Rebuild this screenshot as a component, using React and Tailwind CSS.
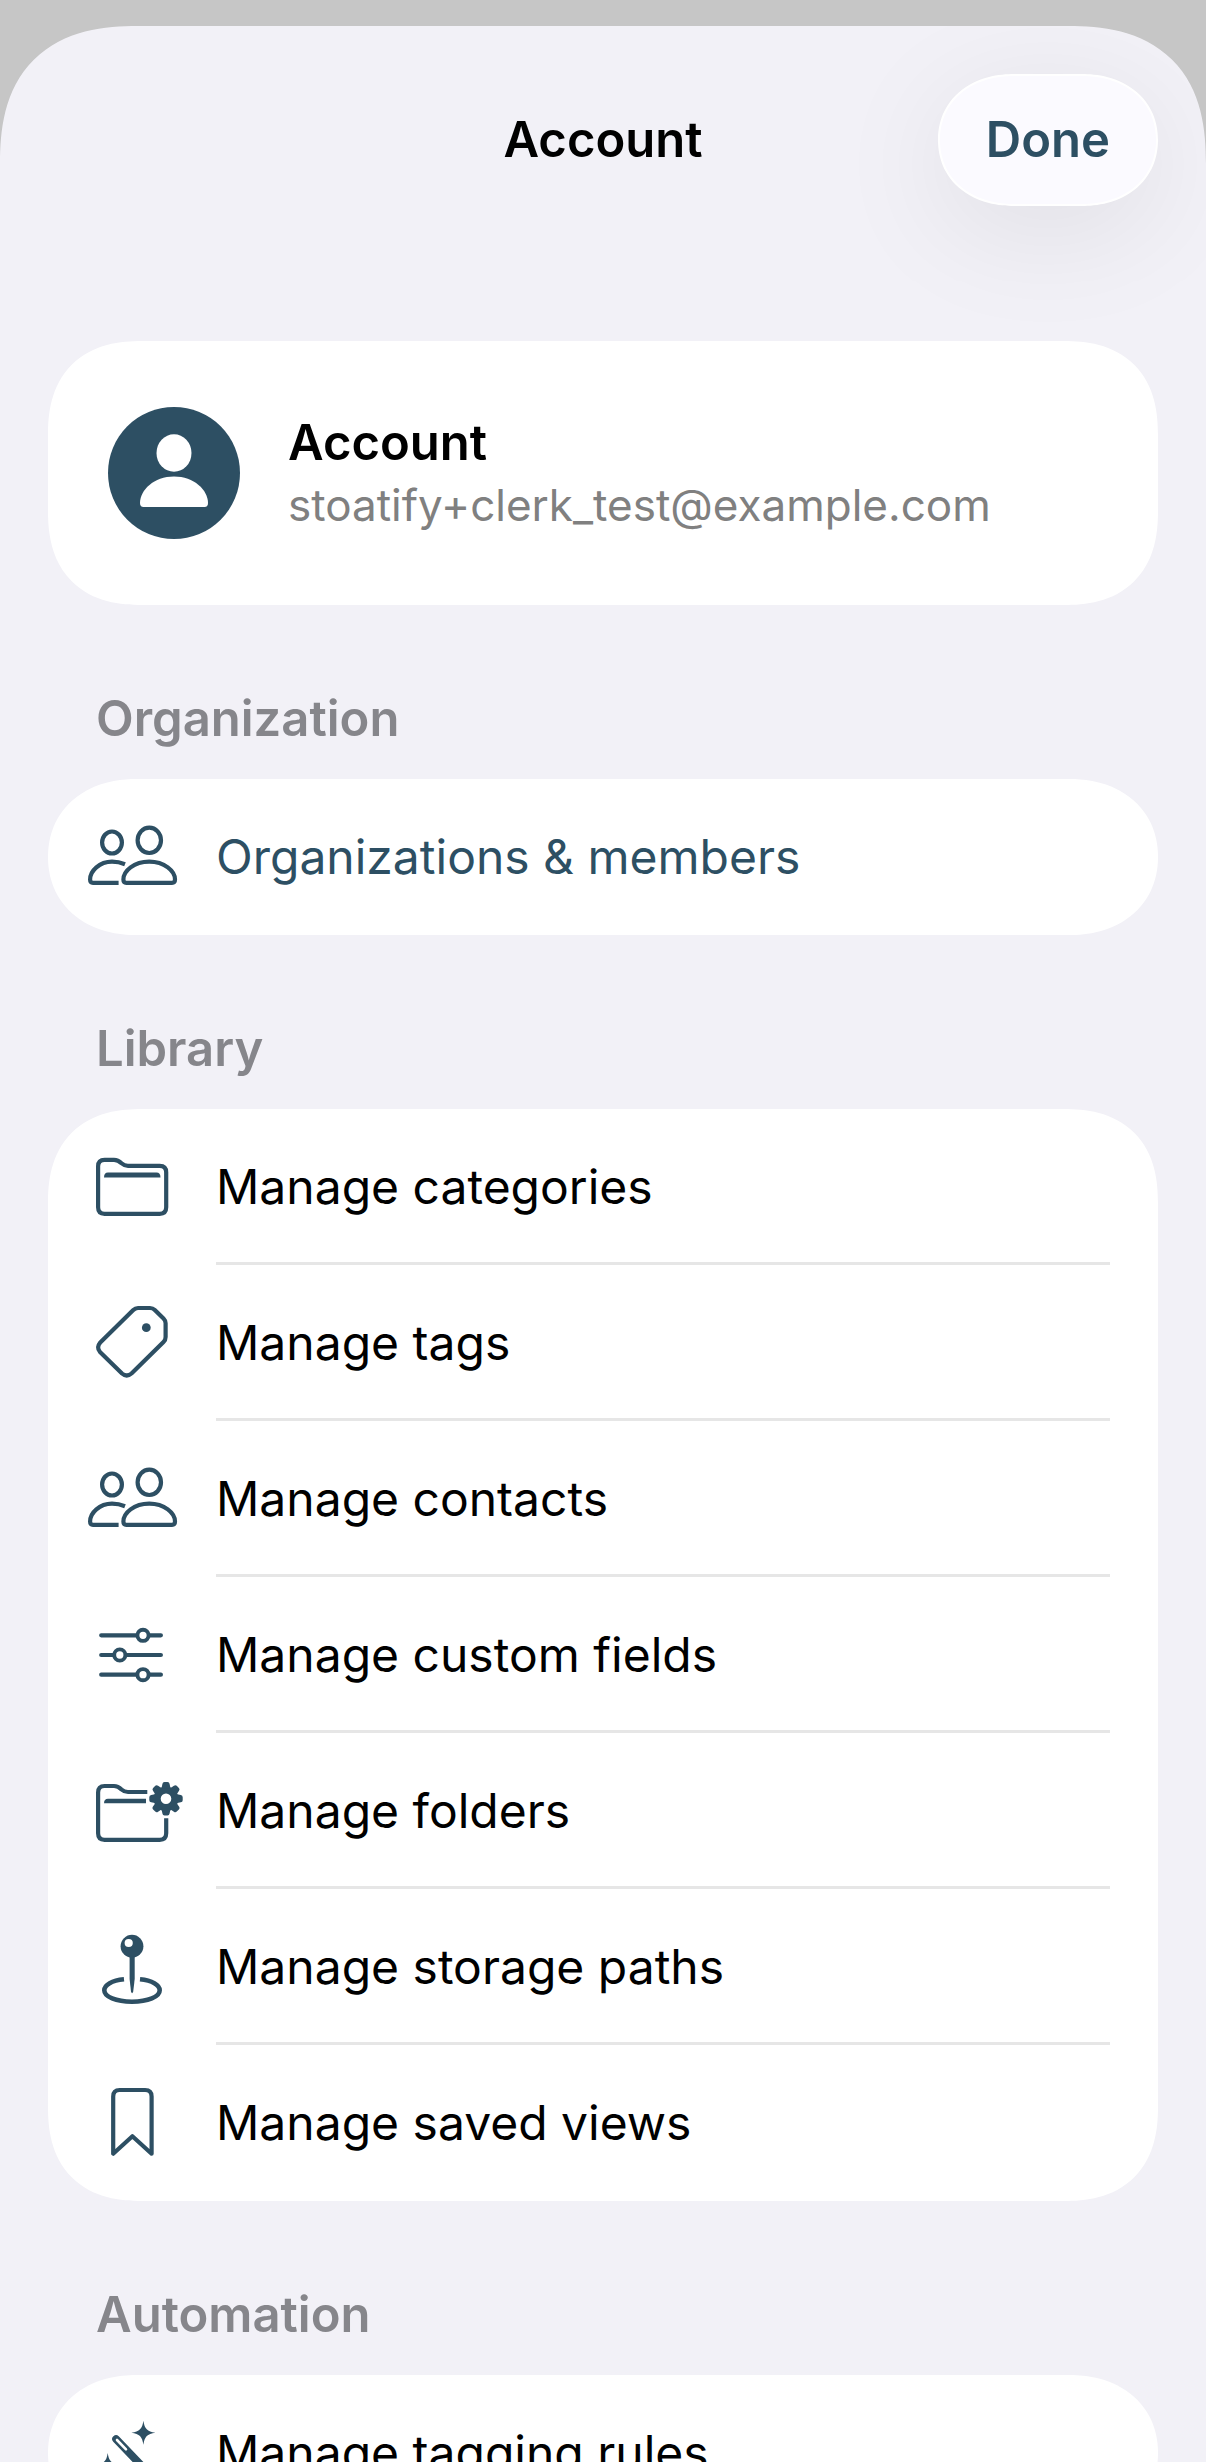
const rows = [
  { label: 'Manage categories', Icon: FolderIcon },
  { label: 'Manage tags', Icon: TagIcon },
  { label: 'Manage contacts', Icon: PeopleIcon },
  { label: 'Manage custom fields', Icon: SlidersIcon },
  { label: 'Manage folders', Icon: FolderGearIcon },
  { label: 'Manage storage paths', Icon: PinIcon },
  { label: 'Manage saved views', Icon: BookmarkIcon },
]

const gearTeeth = [0, 45, 90, 135, 180, 225, 270, 315]

function IconBase({ children }) {
  return (
    <svg
      viewBox="0 0 96 96"
      className="size-24 shrink-0 overflow-visible text-[#2d4f63]"
      fill="none"
      stroke="currentColor"
      strokeWidth="4.2"
      strokeLinecap="round"
      strokeLinejoin="round"
      aria-hidden="true"
    >
      {children}
    </svg>
  )
}

function PeopleIcon() {
  return (
    <IconBase>
      <ellipse cx="28" cy="33.5" rx="9.9" ry="11" />
      <ellipse cx="65.3" cy="31.3" rx="11.7" ry="12.7" />
      <path
        d="M41 55.2C37 53.6 33 52.7 28 52.7C15.5 52.7 6.1 62 6.1 70.5Q6.1 73.8 9 73.8H34.6"
        strokeLinecap="butt"
      />
      <path d="M42.3 73.8Q39.4 73.8 39.4 70.5C39.4 62 50 52.7 65.2 52.7C80.4 52.7 91 62 91 70.5Q91 73.8 88 73.8Z" />
    </IconBase>
  )
}

function FolderIcon() {
  return (
    <IconBase>
      <path d="M14.1 27.3Q14.1 20.8 20.6 20.8H30C34 20.8 35.5 22.3 37.5 24.3C39.5 26.1 41 26.9 44 26.9H75.7Q82.2 26.9 82.2 33.4V68.3Q82.2 74.8 75.7 74.8H20.6Q14.1 74.8 14.1 68.3Z" />
      <path d="M20 38.5Q20 33.6 24 33.6H72.5Q76.5 33.6 76.5 38.5Z" fill="currentColor" stroke="none" />
    </IconBase>
  )
}

function TagIcon() {
  return (
    <IconBase>
      <path d="M49 15.3Q51.3 13 54 13H66Q68.8 13 70.8 15L79.5 23.5Q81.6 25.6 81.6 28.3V42Q81.6 45 79.5 47.1L47.5 78.5Q42.7 82.6 38 78.5L16 57Q12.2 52.3 16 47.8Z" />
      <circle cx="62.3" cy="32.7" r="4.4" fill="currentColor" stroke="none" />
    </IconBase>
  )
}

function SlidersIcon() {
  return (
    <IconBase>
      <path d="M17.2 28.3H52.5M65.5 28.3H76.9M17.2 48H29.5M42 48H76.9M17.2 67.7H52.5M65.5 67.7H76.9" />
      <g fill="#fff" strokeWidth="3.9">
        <circle cx="59" cy="28.3" r="5.6" />
        <circle cx="35.8" cy="48" r="5.6" />
        <circle cx="59" cy="67.7" r="5.6" />
      </g>
    </IconBase>
  )
}

function FolderGearIcon() {
  return (
    <IconBase>
      <path
        d="M63.3 29H44C41 29 39.5 28.3 37.5 26.5C35.5 24.5 34 23 30 23H20.6Q14.1 23 14.1 29.5V70.3Q14.1 76.8 20.6 76.8H75.7Q82.2 76.8 82.2 70.3V55.3"
        strokeLinecap="butt"
      />
      <path d="M20 40.3Q20 35.7 24 35.7H62V40.3Z" fill="currentColor" stroke="none" />
      <circle cx="82" cy="35.7" r="8.8" strokeWidth="7" />
      <g stroke="none" fill="currentColor" transform="translate(82 35.7)">
        {gearTeeth.map((angle) => (
          <path
            key={angle}
            transform={`rotate(${angle})`}
            d="M-4.6 -10L-3.6 -14.8Q-3.3 -16.7 -1.5 -16.7H1.5Q3.3 -16.7 3.6 -14.8L4.6 -10Z"
          />
        ))}
      </g>
    </IconBase>
  )
}

function PinIcon() {
  return (
    <IconBase>
      <circle cx="48" cy="27.2" r="11.4" fill="currentColor" stroke="none" />
      <circle cx="44.7" cy="24" r="4.1" fill="#fff" stroke="none" />
      <path d="M45.6 37H50.7V60L49.2 72.5Q48.1 76 47 72.5L45.6 60Z" fill="currentColor" stroke="none" />
      <path
        d="M40 60.3C28 61.5 20.3 65.8 20.3 71.3C20.3 77.8 32 82.7 48 82.7C64 82.7 75.7 77.8 75.7 71.3C75.7 65.8 68 61.5 56 60.3"
        strokeWidth="4.6"
        strokeLinecap="butt"
      />
    </IconBase>
  )
}

function BookmarkIcon() {
  return (
    <IconBase>
      <path d="M29.2 78.7V21.5Q29.2 15 35.7 15H61.1Q67.6 15 67.6 21.5V78.7L48.4 61.3Z" />
    </IconBase>
  )
}

function WandIcon() {
  return (
    <IconBase>
      <g fill="currentColor" stroke="none">
        <path
          transform="translate(59.4 27.7)"
          d="M0 -12C1.2 -3.8 3.8 -1.2 12 0C3.8 1.2 1.2 3.8 0 12C-1.2 3.8 -3.8 1.2 -12 0C-3.8 -1.2 -1.2 -3.8 0 -12Z"
        />
        <path
          transform="translate(23.7 60)"
          d="M0 -12C1.2 -3.8 3.8 -1.2 12 0C3.8 1.2 1.2 3.8 0 12C-1.2 3.8 -3.8 1.2 -12 0C-3.8 -1.2 -1.2 -3.8 0 -12Z"
        />
      </g>
      <path d="M32 34L76 80" strokeWidth="7.6" />
      <path d="M33 35L42 44.4" stroke="#fff" strokeWidth="2.6" />
    </IconBase>
  )
}

function Row({ label, Icon, accent, divided }) {
  return (
    <button type="button" className="flex h-39 w-full items-center gap-9 pr-12 pl-9 text-left">
      <Icon />
      <span
        className={`flex h-full flex-1 items-center text-[48px] ${accent ? 'text-[#2d4f63]' : 'text-black'} ${divided ? 'shadow-[inset_0_-3px_#e6e6e6]' : ''}`}
      >
        {label}
      </span>
    </button>
  )
}

function Section({ title, single, children }) {
  return (
    <section>
      <h2 className="flex h-[174px] items-end px-12 pb-7 text-[49px] leading-16 font-semibold text-[#86868b]">
        {title}
      </h2>
      <div
        className={`overflow-hidden bg-white ${single ? 'rounded-[88px/78px] [corner-shape:superellipse(1.1)]' : 'rounded-[94px] [corner-shape:superellipse(1.25)]'}`}
      >
        {children}
      </div>
    </section>
  )
}

export default function App() {
  return (
    <div className="h-screen bg-[#c6c6c6] pt-[26px] font-['Inter',sans-serif]">
      <div className="h-full overflow-x-hidden overflow-y-auto rounded-t-[138px] bg-[#f2f1f7] px-12 [corner-shape:superellipse(1.3)] [scrollbar-width:none]">
        <header className="grid h-57 grid-cols-[1fr_auto_1fr] items-center">
          <h1 className="col-start-2 text-[49px] font-semibold text-black">Account</h1>
          <button
            type="button"
            className="flex h-33 items-center justify-self-end rounded-[76px/66px] border-2 border-white bg-[#fbfaff] px-[46px] text-[49px] font-semibold text-[#2d4f63] shadow-[0_24px_120px_rgba(0,0,0,0.08)] [corner-shape:superellipse(1.1)]"
          >
            Done
          </button>
        </header>

        <main className="pt-[87px] pb-12">
          <div className="flex h-66 items-center gap-12 rounded-[94px] bg-white px-15 [corner-shape:superellipse(1.25)]">
            <svg viewBox="0 0 132 132" className="size-33 shrink-0" aria-hidden="true">
              <circle cx="66" cy="66" r="66" fill="#2d4f63" />
              <ellipse cx="66" cy="46" rx="17.5" ry="18.8" fill="#fff" />
              <path
                d="M66 69.5C86 69.5 100 83 100 96Q100 100 96.5 100H35.5Q32 100 32 96C32 83 46 69.5 66 69.5Z"
                fill="#fff"
              />
            </svg>
            <div className="pt-1">
              <p className="text-[49px] leading-15 font-semibold text-black">Account</p>
              <p className="text-[44px] leading-16 text-[#808080]">stoatify+clerk_test@example.com</p>
            </div>
          </div>

          <Section title="Organization" single>
            <Row label="Organizations & members" Icon={PeopleIcon} accent />
          </Section>

          <Section title="Library">
            {rows.map((row, i) => (
              <Row key={row.label} label={row.label} Icon={row.Icon} divided={i < rows.length - 1} />
            ))}
          </Section>

          <Section title="Automation" single>
            <Row label="Manage tagging rules" Icon={WandIcon} />
          </Section>
        </main>
      </div>
    </div>
  )
}
